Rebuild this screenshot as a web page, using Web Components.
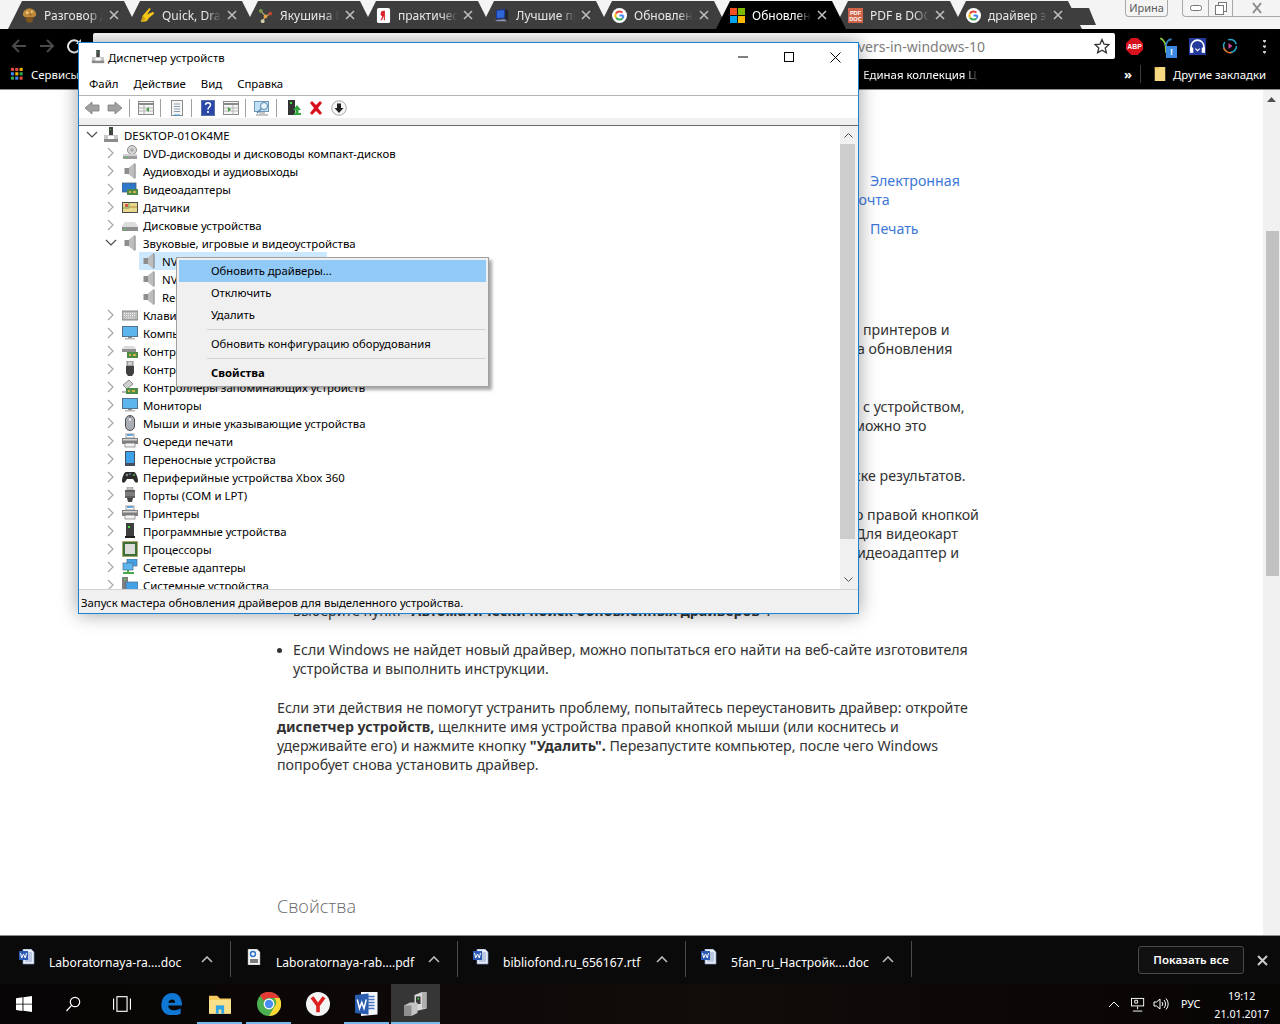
<!DOCTYPE html>
<html lang="ru">
<head>
<meta charset="utf-8">
<title>Обновление драйверов</title>
<style>
  html, body { margin: 0; height: 100%; overflow: hidden; background: #fff; }
  body { font-family: "Noto Sans", "Liberation Sans", sans-serif; }
  browser-page { display: flex; flex-direction: column; width: 1280px; height: 1024px; position: relative; }
</style>
</head>
<body>
<browser-page>
  <tab-strip>
    <browser-tab icon="muffin">Разговор д</browser-tab>
    <browser-tab icon="hand">Quick, Draw</browser-tab>
    <browser-tab icon="molecule">Якушина Е</browser-tab>
    <browser-tab icon="yandex">практичес</browser-tab>
    <browser-tab icon="screen">Лучшие пр</browser-tab>
    <browser-tab icon="google">Обновлен</browser-tab>
    <browser-tab icon="ms" active>Обновлен</browser-tab>
    <browser-tab icon="pdf">PDF в DOC</browser-tab>
    <browser-tab icon="google">драйвер э</browser-tab>
  </tab-strip>
  <browser-toolbar></browser-toolbar>
  <bookmark-bar></bookmark-bar>
  <article-page></article-page>
  <download-shelf>
    <download-item icon="word" width="227">Laboratornaya-ra....doc</download-item>
    <download-item icon="pdffile" width="227">Laboratornaya-rab....pdf</download-item>
    <download-item icon="word" width="228">bibliofond.ru_656167.rtf</download-item>
    <download-item icon="word" width="226">5fan_ru_Настройк....doc</download-item>
  </download-shelf>
  <win-taskbar></win-taskbar>
  <device-manager>
    <tree-row level="0" icon="pc" open>DESKTOP-01OK4ME</tree-row>
    <tree-row level="1" icon="dvd">DVD-дисководы и дисководы компакт-дисков</tree-row>
    <tree-row level="1" icon="speaker">Аудиовходы и аудиовыходы</tree-row>
    <tree-row level="1" icon="video">Видеоадаптеры</tree-row>
    <tree-row level="1" icon="sensor">Датчики</tree-row>
    <tree-row level="1" icon="hdd">Дисковые устройства</tree-row>
    <tree-row level="1" icon="speaker" open>Звуковые, игровые и видеоустройства</tree-row>
    <tree-row level="2" icon="speaker" selected>NVIDIA High Definition Audio</tree-row>
    <tree-row level="2" icon="speaker">NVIDIA Virtual Audio Device</tree-row>
    <tree-row level="2" icon="speaker">Realtek High Definition Audio</tree-row>
    <tree-row level="1" icon="keyboard">Клавиатуры</tree-row>
    <tree-row level="1" icon="monitor">Компьютер</tree-row>
    <tree-row level="1" icon="ide">Контроллеры IDE ATA/ATAPI</tree-row>
    <tree-row level="1" icon="usb">Контроллеры USB</tree-row>
    <tree-row level="1" icon="storage">Контроллеры запоминающих устройств</tree-row>
    <tree-row level="1" icon="monitor">Мониторы</tree-row>
    <tree-row level="1" icon="mouse">Мыши и иные указывающие устройства</tree-row>
    <tree-row level="1" icon="printer">Очереди печати</tree-row>
    <tree-row level="1" icon="portable">Переносные устройства</tree-row>
    <tree-row level="1" icon="gamepad">Периферийные устройства Xbox 360</tree-row>
    <tree-row level="1" icon="port">Порты (COM и LPT)</tree-row>
    <tree-row level="1" icon="printer">Принтеры</tree-row>
    <tree-row level="1" icon="software">Программные устройства</tree-row>
    <tree-row level="1" icon="cpu">Процессоры</tree-row>
    <tree-row level="1" icon="net">Сетевые адаптеры</tree-row>
    <tree-row level="1" icon="system">Системные устройства</tree-row>
  </device-manager>
</browser-page>

<script>
const UI_FONT = '"Noto Sans", "Liberation Sans", sans-serif';

// all icons are drawn on a 16x16 box unless the use site says otherwise
const ICONS = {
  muffin: '<path d="M1 7c0-4 3-6.500 7-6.500S15 3 15 7c0 1.500-1 2.500-2.500 2.500h-9C2 9.500 1 8.500 1 7z" fill="#c08a3a"/><path d="M3.500 9.500h9L11 15c-2 1-4 1-6 0z" fill="#7c5420"/><circle cx="5.500" cy="5" r="1.500" fill="#ecc98a"/><circle cx="10.500" cy="4" r="1.200" fill="#ecc98a"/><circle cx="9" cy="7" r="1" fill="#8a5a1c"/>',
  hand: '<path d="M1 15l2-7 7-8 1.500 1-4 6 6.500-3 1 2-5 4-3 4z" fill="#f5c518"/><path d="M1 15l2-7 3 4z" fill="#caa00f"/>',
  molecule: '<path d="M3 3l5 6 5-3M8 9l-3 5" stroke="#a39a80" stroke-width="1.500" fill="none"/><circle cx="3" cy="3" r="2" fill="#7d9e4a"/><circle cx="8" cy="9" r="2" fill="#e3a33b"/><circle cx="13" cy="6" r="2" fill="#c8452d"/><circle cx="5" cy="14" r="2" fill="#d8d0b0"/>',
  yandex: '<rect x="1" y="0" width="14" height="16" rx="2" fill="#fff"/><path d="M9.500 3H8C6 3 5 4.200 5 6c0 1.400.6 2.300 1.700 2.800L4.800 13h1.500l1.700-3.900h.3V13h1.200z" fill="#d8232a"/>',
  screen: '<path d="M2 2l10-1v10L2 12z" fill="#1a2f8a"/><path d="M3 3l8-1v8l-8 1z" fill="#2f66d6"/><path d="M12 1l3 2v11l-3-3z" fill="#20242e"/><path d="M1 13l10-1 3 2H3z" fill="#8d97b5"/>',
  google: '<circle cx="8" cy="8" r="8" fill="#fff"/><path d="M12.200 8H8" stroke="#4285f4" stroke-width="2"/><path d="M11.200 11a4.500 4.500 0 0 0 1-3" stroke="#4285f4" stroke-width="2" fill="none"/><path d="M4.200 10.200A4.500 4.500 0 0 0 11.200 11" stroke="#34a853" stroke-width="2" fill="none"/><path d="M4.200 5.800a4.500 4.500 0 0 0 0 4.400" stroke="#fbbc05" stroke-width="2" fill="none"/><path d="M11.200 5A4.500 4.500 0 0 0 4.200 5.800" stroke="#ea4335" stroke-width="2" fill="none"/>',
  ms: '<rect x="0" y="0" width="7.500" height="7.500" fill="#f25022"/><rect x="8.500" y="0" width="7.500" height="7.500" fill="#7fba00"/><rect x="0" y="8.500" width="7.500" height="7.500" fill="#00a4ef"/><rect x="8.500" y="8.500" width="7.500" height="7.500" fill="#ffb900"/>',
  pdf: '<rect width="16" height="16" fill="#d0634a"/><text x="8" y="7" font-size="6" font-family="Liberation Sans" font-weight="700" fill="#fff" text-anchor="middle">PDF</text><text x="8" y="14" font-size="6" font-family="Liberation Sans" font-weight="700" fill="#fff" text-anchor="middle">DOC</text>',
  word: '<path d="M4 0h8l3 3v12H4z" fill="#e9eef8" stroke="#7f95c0" stroke-width=".7"/><path d="M9 4h4M9 6h4M9 8h4M9 10h4M6 12h7" stroke="#8aa2cc"/><rect x="0" y="2" width="9" height="9" fill="#2b5bb5"/><path d="M1.500 4l1.200 5 1.800-4 1.800 4 1.200-5" stroke="#fff" fill="none"/>',
  pdffile: '<path d="M2 0h9l3 3v13H2z" fill="#f6f6f6" stroke="#9a9a9a" stroke-width=".5"/><circle cx="7" cy="5" r="2.500" fill="none" stroke="#2773c9" stroke-width="1.500"/><path d="M4 10h8v4H4z" fill="#7d7d7d"/>',
  pc: '<rect x="6" y="0" width="4" height="8" fill="#444"/><rect x="7" y="2" width="1" height="1" fill="#3fd13f"/><path d="M1 8h14v7H1z" fill="#c9c9c9"/><path d="M1 12h14v3H1z" fill="#8b8b8b"/><rect x="5" y="9" width="6" height="3" fill="#fff"/>',
  dvd: '<circle cx="10" cy="5" r="4.500" fill="#d6d6d6" stroke="#8c8c8c"/><circle cx="10" cy="5" r="1.200" fill="#fff" stroke="#8c8c8c"/><path d="M1 9h14v5H1z" fill="#9c9c9c"/><path d="M1 9h14v2H1z" fill="#d2d2d2"/><rect x="3" y="12" width="2" height="1" fill="#3fd13f"/>',
  speaker: '<path d="M2.500 5H7v6H2.500z" fill="#8d8d8d"/><path d="M7 4.500L12.500 0v16L7 11.500z" fill="#bdbdbd"/><path d="M12.500 0l1 1v14l-1 1z" fill="#6e6e6e"/>',
  video: '<rect x="0" y="2" width="14" height="9" fill="#2f78c9" stroke="#4a5e78" stroke-width=".8"/><rect x="5" y="8" width="11" height="6" fill="#4d8a45"/><path d="M7 10h2v2H7zM11 10h3v2h-3z" fill="#d4b24a"/>',
  sensor: '<rect x="0" y="3" width="16" height="11" fill="#4b4b4b"/><rect x="1" y="4" width="14" height="9" fill="#e8d98c"/><path d="M1 9h6V4" stroke="#6f9a58" fill="none"/><rect x="3" y="5" width="3" height="3" fill="#d9534f"/><path d="M8 8h7" stroke="#b58a3a"/>',
  hdd: '<path d="M3 5h10l3 4v5H0V9z" fill="#dcdcdc"/><path d="M0 10h16v4H0z" fill="#8f8f8f"/><rect x="2" y="12" width="2" height="1" fill="#3fd13f"/>',
  keyboard: '<rect x="0" y="4" width="16" height="9" fill="#bdbdbd" stroke="#6f6f6f" stroke-width=".8"/><path d="M2 6.500h12M2 8.500h12M4 10.800h8" stroke="#f3f3f3" stroke-dasharray="1 1"/>',
  monitor: '<rect x="0.500" y="1.500" width="15" height="10" fill="#5cb5ec" stroke="#54718c"/><rect x="6" y="12" width="4" height="1" fill="#8b8b8b"/><rect x="3" y="13" width="10" height="1.500" fill="#b8b8b8"/>',
  ide: '<path d="M2 3h10l2 3H0z" fill="#dcdcdc"/><rect x="0" y="6" width="14" height="3" fill="#8f8f8f"/><rect x="5" y="9" width="11" height="6" fill="#4d8a45"/><path d="M7 11h2v2H7zM11 11h3v2h-3z" fill="#d4b24a"/>',
  usb: '<rect x="5" y="0" width="6" height="5" fill="#cfcfcf" stroke="#555" stroke-width=".7"/><path d="M4 5h8v7l-2 3H6l-2-3z" fill="#3f3f3f"/>',
  storage: '<path d="M1 6l6-5 4 4-6 5z" fill="#cfcfcf" stroke="#666" stroke-width=".7"/><rect x="4" y="9" width="12" height="6" fill="#4d8a45"/><path d="M6 11h2v2H6zM10 11h3v2h-3z" fill="#d4b24a"/><path d="M0 13h4" stroke="#777"/>',
  mouse: '<rect x="3.500" y="0.500" width="9" height="15" rx="4.500" fill="#a9aeb5" stroke="#4d4d4d"/><path d="M8 1v5" stroke="#4d4d4d"/><rect x="7" y="3" width="2" height="3" fill="#e4e4e4"/>',
  printer: '<rect x="4" y="1" width="8" height="4" fill="#fff" stroke="#777" stroke-width=".7"/><path d="M5 2h6" stroke="#3f8fd8" stroke-width="1.500"/><rect x="0" y="5" width="16" height="6" fill="#7f7f7f"/><rect x="1" y="6" width="14" height="1.500" fill="#d4d4d4"/><rect x="3" y="10" width="10" height="4" fill="#f2f2f2" stroke="#777" stroke-width=".7"/>',
  portable: '<rect x="3" y="0" width="10" height="15" fill="#454f5c"/><rect x="4" y="1" width="8" height="11" fill="#3ea2ea"/>',
  gamepad: '<path d="M4 3h8c2 0 4 6 4 9 0 2-2 2-3 1l-2-3H5l-2 3c-1 1-3 1-3-1 0-3 2-9 4-9z" fill="#2b2b2b"/><circle cx="12" cy="6" r="1" fill="#5ab04a"/><circle cx="5" cy="6" r="1.200" fill="#888"/><circle cx="8" cy="5" r=".8" fill="#9ad"/>',
  port: '<rect x="5" y="0" width="6" height="3" fill="#c6c6c6" stroke="#777" stroke-width=".5"/><rect x="3" y="3" width="10" height="8" fill="#5e5e5e"/><path d="M3 6h10M3 8h10" stroke="#9b9b9b"/><path d="M5 11h6l-1 4H6z" fill="#444"/>',
  software: '<rect x="4" y="0" width="8" height="15" fill="#3f3f3f"/><rect x="6" y="3" width="2" height="2" fill="#3fe03f"/><rect x="3" y="13" width="10" height="2" fill="#1f1f1f"/>',
  cpu: '<rect x="0.500" y="0.500" width="15" height="15" fill="#3d6e3a" stroke="#b89a3c" stroke-dasharray="1 1"/><rect x="3" y="3" width="10" height="10" fill="#dcdcd8"/>',
  net: '<rect x="5" y="0" width="10" height="7" fill="#45a0e6" stroke="#4d6a86" stroke-width=".7"/><rect x="1" y="4" width="10" height="7" fill="#5cb5ec" stroke="#4d6a86" stroke-width=".7"/><path d="M6 11v2M1 14h11" stroke="#4ca84c" stroke-width="2"/>',
  system: '<rect x="0" y="0" width="6" height="16" fill="#7f7f7f"/><rect x="2" y="2" width="2" height="1" fill="#3fe03f"/><rect x="4" y="5" width="12" height="10" fill="#45a0e6" stroke="#4d6a86" stroke-width=".7"/>',
  winlogo: '<path d="M0 2.200l6.500-.9v6.400H0zM7.400 1.200L16 0v7.700H7.400zM0 8.500h6.500v6.400L0 14zM7.400 8.500H16V16l-8.600-1.200z" fill="#fff"/>',
  search: '<circle cx="10" cy="6" r="4.700" fill="none" stroke="#fff" stroke-width="1.200"/><path d="M6.600 9.400L1.500 15" stroke="#fff" stroke-width="1.200"/>',
  taskview: '<rect x="3.500" y="1.500" width="9" height="13" fill="none" stroke="#fff"/><path d="M1 3.500H.5v9H1M15 3.500h.5v9H15" stroke="#fff" fill="none"/>',
  edge: '<path d="M1 9C1 3 5 0 9 0c4 0 7 3 7 9H6c0 3 4 5 9 2v4c-6 3-14 1-14-6zm5-2h5c0-3-4-3-5 0z" fill="#0f78d4"/>',
  explorer: '<path d="M0 2h6l2 2h8v11H0z" fill="#f4c95d"/><rect x="0" y="5" width="16" height="10" fill="#fbe08a"/><rect x="5" y="9" width="6" height="6" fill="#2ea3e6"/><rect x="7" y="12" width="2" height="3" fill="#fbe08a"/>',
  chrome: '<circle cx="8" cy="8" r="8" fill="#4caf50"/><path d="M8 0a8 8 0 0 1 7 4H8a4 4 0 0 0-3.500 2L2 2a8 8 0 0 1 6-2z" fill="#e53935"/><path d="M15 4a8 8 0 0 1-7 12l3.500-6a4 4 0 0 0 0-6z" fill="#fdd835"/><circle cx="8" cy="8" r="3.600" fill="#fff"/><circle cx="8" cy="8" r="2.800" fill="#4a8cf0"/>',
  yabrowser: '<circle cx="8" cy="8" r="8" fill="#f4f4f4"/><path d="M4 3.500l4 5.500v4.500M12 3.500L8 9" stroke="#e02020" stroke-width="2.400" fill="none"/>',
  winword: '<path d="M4 0h11v15L4 16z" fill="#f3f6fb"/><path d="M8 3h5M8 5h5M8 7h5M8 9h5M8 11h5" stroke="#4a76c2"/><path d="M0 2l9-1v14l-9-1z" fill="#2a5db0"/><path d="M1.500 5l1.500 6 1.500-4 1.500 4 1.500-6" stroke="#fff" fill="none"/>',
  devmgr: '<path d="M7 2l5-2h3v11l-8 2z" fill="#d8d8d8"/><path d="M12 0h3v11h-3z" fill="#aeaeae"/><rect x="8" y="3" width="3" height="5" fill="#3a3a3a"/><rect x="9" y="4" width="1" height="1" fill="#3fe03f"/><path d="M0 9l4-2h5v7l-4 2H0z" fill="#c4c4c4"/><path d="M0 9h5v7H0z" fill="#8f8f8f"/>',
  back: '<path d="M1 8l7-6v3h7v6H8v3z" fill="#a0a0a0" stroke="#7e7e7e" stroke-width=".8"/>',
  forward: '<path d="M15 8L8 2v3H1v6h7v3z" fill="#a0a0a0" stroke="#7e7e7e" stroke-width=".8"/>',
  pane1: '<rect x=".5" y="1.500" width="15" height="13" fill="#f5f5f5" stroke="#8b8b8b"/><path d="M1 4h14" stroke="#8b8b8b" stroke-width="2"/><path d="M6 5v9M1 8h5M1 11h5M6 8h9M6 11h9" stroke="#b5b5b5"/><path d="M11 7l-3 2.500 3 2.500z" fill="#3e9a45"/>',
  pane2: '<rect x="2.500" y=".5" width="11" height="15" fill="#f5f5f5" stroke="#8b8b8b"/><path d="M5 4h6M5 6.500h6M5 9h6M5 11.500h6" stroke="#8e9cb0"/><path d="M5 15h6" stroke="#3e9ad8"/>',
  help: '<rect x="1.500" y=".5" width="13" height="15" fill="#2a47a8" stroke="#5a6ea8"/><path d="M5.500 5c0-3 5-3 5 0 0 2-2.500 2-2.500 4.500" stroke="#fff" stroke-width="1.500" fill="none"/><rect x="7.200" y="11" width="1.600" height="2" fill="#fff"/>',
  pane3: '<rect x=".5" y="1.500" width="15" height="13" fill="#f5f5f5" stroke="#8b8b8b"/><path d="M1 4h14" stroke="#8b8b8b" stroke-width="2"/><path d="M10 5v9M1 8h9M1 11h9M10 8h5M10 11h5" stroke="#b5b5b5"/><path d="M5 7l3 2.500-3 2.500z" fill="#3e9a45"/>',
  scan: '<rect x=".5" y="1.500" width="14" height="10" fill="#bfe0f5" stroke="#6f97b8"/><path d="M5 13h6M2 15h12" stroke="#8b8b8b"/><circle cx="10" cy="6" r="3.500" fill="#e7f4fc" stroke="#5a87ad"/><path d="M7.500 8.500L3 13" stroke="#5a87ad" stroke-width="1.500"/>',
  update: '<rect x="2" y="0" width="7" height="15" fill="#333"/><rect x="4" y="2" width="2" height="2" fill="#3fe03f"/><path d="M11 5l4 5h-2.500v3h-3v-3H7z" fill="#2fa53a"/><path d="M8 14h7" stroke="#2fa53a" stroke-width="2"/>',
  remove: '<path d="M2 3l2-2 4 4 4-4 2 2-4 5 4 5-2 2-4-4-4 4-2-2 4-5z" fill="#d8121c"/>',
  down: '<circle cx="8" cy="8" r="7.300" fill="#f7f7f7" stroke="#a8a8a8"/><path d="M6 3.500h4V8h2.500L8 13 3.500 8H6z" fill="#222"/>',
  abp: '<path d="M5 0h6l5 5v6l-5 5H5l-5-5V5z" fill="#d8121c"/><text x="8" y="10.500" font-size="6.500" font-family="Liberation Sans" font-weight="700" fill="#fff" text-anchor="middle">ABP</text>',
  sprout: '<path d="M3 1c4 2 5 5 5 13" stroke="#8dc63f" stroke-width="1.600" fill="none"/><path d="M13 2c-3 0-5 3-5 6" stroke="#2f7fb8" stroke-width="1.600" fill="none"/>',
  headphones: '<rect x="0" y="0" width="16" height="16" fill="#243a9c"/><path d="M2 12V8a6 6 0 0 1 12 0v4" stroke="#fff" stroke-width="1.600" fill="none"/><rect x="1" y="9" width="3" height="5" fill="#fff"/><rect x="12" y="9" width="3" height="5" fill="#fff"/><path d="M6 10l2 2 2-2" stroke="#fff" fill="none"/>',
  play: '<circle cx="8" cy="8" r="6.500" fill="none" stroke="#26a5c9" stroke-width="1.500" stroke-dasharray="10 4"/><path d="M1.700 9.500a6.500 6.500 0 0 0 8 5" stroke="#e2752b" stroke-width="1.500" fill="none"/><path d="M6.500 5l4 3-4 3z" fill="#d24a9a"/>',
  folder: '<path d="M2 0h12v16H2z" fill="#f7d983"/><path d="M2 0h5v2H2z" fill="#e4bf5e"/>',
  apps: '<g fill="#e64a3b"><rect x="1" y="1" width="3.500" height="3.500"/><rect x="6" y="1" width="3.500" height="3.500"/></g><rect x="11" y="1" width="3.500" height="3.500" fill="#f4b400"/><rect x="1" y="6" width="3.500" height="3.500" fill="#4285f4"/><rect x="6" y="6" width="3.500" height="3.500" fill="#f4b400"/><rect x="11" y="6" width="3.500" height="3.500" fill="#34a853"/><rect x="1" y="11" width="3.500" height="3.500" fill="#34a853"/><rect x="6" y="11" width="3.500" height="3.500" fill="#4285f4"/><rect x="11" y="11" width="3.500" height="3.500" fill="#e64a3b"/>',
  star: '<path d="M8 1.500l2 4.600 5 .5-3.800 3.300 1.200 4.900L8 12.200l-4.400 2.600 1.200-4.900L1 6.600l5-.5z" fill="none" stroke="#333" stroke-width="1.300"/>',
  net_tray: '<rect x=".5" y="1.500" width="13" height="8" fill="none" stroke="#fff"/><path d="M4 3.500h3v3H4z" fill="none" stroke="#fff"/><path d="M7 10v3M2 15h10" stroke="#fff"/>',
  sound: '<path d="M1 6h2.500L7 3v10l-3.500-3H1z" fill="none" stroke="#fff"/><path d="M9 6a3 3 0 0 1 0 4M11 4a6 6 0 0 1 0 8M13 2.500a8 8 0 0 1 0 11" fill="none" stroke="#fff"/>'
};

class AppIcon extends HTMLElement {
  connectedCallback() {
    if (this.shadowRoot) return;
    const size = this.getAttribute('size') || 16;
    const shadow = this.attachShadow({ mode: 'open' });
    shadow.innerHTML = `
      <style>:host { display: inline-flex; flex: none; width: ${size}px; height: ${size}px; } svg { display: block; }</style>
      <svg width="${size}" height="${size}" viewBox="0 0 16 16">${ICONS[this.getAttribute('name')] || ''}</svg>`;
  }
}

// shared boilerplate: each subclass returns its html with its <style> in it
class ShadowEl extends HTMLElement {
  connectedCallback() {
    if (this.shadowRoot) return;
    this.attachShadow({ mode: 'open' }).innerHTML = this.render();
  }
}

class TabStrip extends ShadowEl {
  render() {
    return `<style>
      :host { display: flex; height: 29px; flex: none; background: #f4f4f4; padding-left: 8px; box-sizing: border-box; position: relative; }
      .newtab { width: 32px; height: 17px; margin: 8px 0 0 -6px; background: #3e3e3e; clip-path: polygon(0 0, 78% 0, 100% 100%, 22% 100%); }
      .right { margin-left: auto; display: flex; align-items: flex-start; }
      .user { width: 41px; height: 16px; border: 1px solid #a8a8a8; border-top: 0; border-radius: 0 0 4px 4px; font: 11px/15px ${UI_FONT}; color: #5a5a5a; text-align: center; margin-right: 14px; }
      .controls { display: flex; height: 16px; border: 1px solid #a8a8a8; border-top: 0; border-right: 0; border-radius: 0 0 0 4px; }
      .controls span { display: flex; align-items: center; justify-content: center; border-right: 1px solid #a8a8a8; }
      .controls span:last-child { border: 0; }
    </style>
    <slot></slot>
    <div class="newtab"></div>
    <div class="right">
      <div class="user">Ирина</div>
      <div class="controls">
        <span style="width:25px"><svg width="12" height="6"><rect x=".5" y=".5" width="11" height="5" rx="2" fill="#fff" stroke="#777"/></svg></span>
        <span style="width:23px"><svg width="12" height="13"><rect x="3.500" y=".5" width="8" height="9" fill="#fff" stroke="#777"/><rect x=".5" y="3.500" width="8" height="9" fill="#fff" stroke="#777"/></svg></span>
        <span style="width:47px"><svg width="12" height="12"><path d="M2 1l8 10M10 1L2 11" stroke="#8a8a8a" stroke-width="2"/></svg></span>
      </div>
    </div>`;
  }
}

class BrowserTab extends ShadowEl {
  render() {
    const active = this.hasAttribute('active');
    return `<style>
      :host { display: flex; align-items: center; flex: none; width: 130px; height: 28px; margin: 1px -12px 0 0; box-sizing: border-box;
        padding: 0 19px 0 14px; font: 12px ${UI_FONT}; color: #fff; position: relative; z-index: ${active ? 2 : 1};
        background: ${active ? '#000' : '#3e3e3e'}; clip-path: polygon(0 100%, 14px 0, calc(100% - 14px) 0, 100% 100%); }
      .title { flex: 1; margin-left: 7px; white-space: nowrap; overflow: hidden; color: ${active ? '#fff' : '#e8e8e8'};
        -webkit-mask-image: linear-gradient(90deg, #000 75%, transparent 100%); mask-image: linear-gradient(90deg, #000 75%, transparent 100%); }
      svg { flex: none; margin-left: 6px; }
    </style>
    <app-icon name="${this.getAttribute('icon')}" size="15"></app-icon>
    <span class="title"><slot></slot></span>
    <svg width="10" height="10"><path d="M1 1l8 8M9 1L1 9" stroke="#bdbdbd" stroke-width="1.600"/></svg>`;
  }
}

class BrowserToolbar extends ShadowEl {
  render() {
    return `<style>
      :host { display: flex; align-items: center; height: 37px; flex: none; background: #000; padding: 0 8px 3px 10px; box-sizing: border-box; }
      .nav { display: flex; align-items: center; gap: 10px; width: 83px; flex: none; }
      .url { width: 1022px; height: 26px; flex: none; box-sizing: border-box; background: #fff; border-radius: 2px; display: flex; align-items: center;
        padding: 0 5px 0 765px; font: 14px ${UI_FONT}; color: #7d7d7d; white-space: nowrap; }
      .url span { flex: 1; overflow: hidden; }
      .ext { display: flex; align-items: center; margin-left: 11px; gap: 14px; }
      .dots { width: 3px; height: 15px; background: radial-gradient(circle 1.500px at 1.500px 2px, #ccc 99%, transparent) 0 0 / 3px 5.500px; }
    </style>
    <div class="nav">
      <svg width="18" height="16"><path d="M9 2L3 8l6 6M3 8h13" stroke="#4a4a4a" stroke-width="2" fill="none"/></svg>
      <svg width="18" height="16"><path d="M9 2l6 6-6 6M15 8H2" stroke="#4a4a4a" stroke-width="2" fill="none"/></svg>
      <svg width="16" height="16"><path d="M13 5a6 6 0 1 0 1 4" stroke="#eee" stroke-width="2" fill="none"/><path d="M15 1v5h-5z" fill="#eee"/></svg>
    </div>
    <div class="url"><span>vers-in-windows-10</span><app-icon name="star"></app-icon></div>
    <div class="ext">
      <app-icon name="abp" size="17"></app-icon>
      <span style="position:relative;display:inline-flex"><app-icon name="sprout" size="18"></app-icon><i style="position:absolute;left:9px;top:9px;width:11px;height:12px;background:#3d88e0;color:#fff;font:700 9px/12px 'Liberation Sans';text-align:center">!</i></span>
      <app-icon name="headphones" size="17"></app-icon>
      <app-icon name="play" size="16" style="margin-left:2px"></app-icon>
      <span class="dots" style="margin-left:11px"></span>
    </div>`;
  }
}

class BookmarkBar extends ShadowEl {
  render() {
    return `<style>
      :host { display: flex; align-items: center; height: 24px; flex: none; box-sizing: border-box; background: #000; padding: 0 14px 7px 10px;
        border-bottom: 1px solid #8d8d8d; font: 11.400px ${UI_FONT}; color: #fff; white-space: nowrap; }
      .first { margin-left: 7px; }
      .fade { margin-left: 784px; width: 116px; -webkit-mask-image: linear-gradient(90deg, #000 88%, transparent); mask-image: linear-gradient(90deg, #000 88%, transparent); }
      .more { margin-left: auto; font-weight: 700; font-size: 13px; }
      .sep { width: 1px; height: 18px; background: #3c3c3c; margin: 0 12px 0 8px; }
    </style>
    <app-icon name="apps" size="14"></app-icon>
    <span class="first">Сервисы</span>
    <span class="fade">Единая коллекция Ц</span>
    <span class="more">»</span>
    <span class="sep"></span>
    <app-icon name="folder" size="14" style="margin-right:-1px"></app-icon>
    <span style="margin-left:7px">Другие закладки</span>`;
  }
}

class ArticlePage extends ShadowEl {
  render() {
    return `<style>
      :host { display: flex; flex: 1; min-height: 0; background: #fff; font: 14.200px/19px ${UI_FONT}; color: #333; }
      main { flex: 1; padding-top: 80.500px; white-space: nowrap; }
      .r { display: block; }
      a { color: #3d78d8; text-decoration: none; }
      .lines { display: block; margin-left: 277px; }
      ul { margin: 20px 0 20px 277px; padding: 0 0 0 16px; }
      li::marker { font-size: 13px; }
      h2 { margin: 119.500px 0 0 277px; font: 300 18px/26px "Open Sans", ${UI_FONT}; color: #6a6a6a; }
      .bar { flex: none; width: 17px; background: #f1f1f1; display: flex; flex-direction: column; align-items: center; }
      .thumb { width: 13px; height: 345px; margin-top: 129px; margin-left: 1px; background: #c1c1c1; }
      svg { margin-top: 7px; }
    </style>
    <main>
      <a class="r" style="margin-left:870px">Электронная</a>
      <a class="r" style="margin-left:850px">почта</a>
      <a class="r" style="margin:10px 0 0 870px">Печать</a>
      <span class="r" style="margin:82px 0 0 863px">принтеров и</span>
      <span class="r" style="margin-left:857px">а обновления</span>
      <span class="r" style="margin:39px 0 0 863px">с устройством,</span>
      <span class="r" style="margin-left:854px">можно это</span>
      <span class="r" style="margin:31px 0 0 828px">поиске результатов.</span>
      <span class="r" style="margin:20px 0 0 855px">о правой кнопкой</span>
      <span class="r" style="margin-left:855px">Для видеокарт</span>
      <span class="r" style="margin-left:849px">видеоадаптер и</span>
      <ul style="margin-top:39px;margin-bottom:0;list-style:none"><li>выберите пункт <b>"Автоматически поиск обновленных драйверов"</b>.</li></ul>
      <ul>
        <li>Если Windows не найдет новый драйвер, можно попытаться его найти на веб-сайте изготовителя<br>устройства и выполнить инструкции.</li>
      </ul>
      <span class="lines">Если эти действия не помогут устранить проблему, попытайтесь переустановить драйвер: откройте<br>
      <b>диспетчер устройств,</b> щелкните имя устройства правой кнопкой мыши (или коснитесь и<br>
      удерживайте его) и нажмите кнопку <b>"Удалить".</b> Перезапустите компьютер, после чего Windows<br>
      попробует снова установить драйвер.</span>
      <h2>Свойства</h2>
    </main>
    <div class="bar">
      <svg width="9" height="5"><path d="M0 5l4.500-5L9 5z" fill="#505050"/></svg>
      <div class="thumb"></div>
    </div>`;
  }
}

class DownloadShelf extends ShadowEl {
  render() {
    return `<style>
      :host { display: flex; align-items: center; height: 49px; flex: none; box-sizing: border-box; background: #0a0a0a; border-top: 1px solid #8d8d8d; padding-left: 4px; }
      button { margin-left: auto; width: 106px; height: 28px; box-sizing: border-box; background: #111; border: 1px solid #4a4a4a; border-radius: 3px; color: #fff; font: 600 11.500px ${UI_FONT}; padding: 0 0 2px; }
      svg { margin: 0 12px 0 13px; }
    </style>
    <slot></slot>
    <button>Показать все</button>
    <svg width="11" height="11"><path d="M1 1l9 9M10 1l-9 9" stroke="#ccc" stroke-width="2"/></svg>`;
  }
}

class DownloadItem extends ShadowEl {
  render() {
    return `<style>
      :host { display: flex; align-items: center; flex: none; width: ${this.getAttribute('width')}px; height: 36px; box-sizing: border-box; border-right: 1px solid #4a4a4a;
        margin-bottom: 2px; padding-left: 15px; color: #fff; font: 12.100px ${UI_FONT}; white-space: nowrap; }
      .name { margin-left: 14px; flex: 1; padding-top: 6px; }
      svg { margin-right: 17px; }
      app-icon { margin-top: -4px; }
    </style>
    <app-icon name="${this.getAttribute('icon')}" size="16"></app-icon>
    <span class="name"><slot></slot></span>
    <svg width="12" height="7"><path d="M1 6l5-5 5 5" stroke="#bbb" stroke-width="1.600" fill="none"/></svg>`;
  }
}

class WinTaskbar extends ShadowEl {
  render() {
    const apps = [['winlogo', 16, 0], ['search', 16, 0], ['taskview', 18, 0], ['edge', 22, 0], ['explorer', 22, 1], ['chrome', 24, 1], ['yabrowser', 24, 0], ['winword', 24, 1], ['devmgr', 24, 2]];
    const cells = apps.map(([name, size, state]) =>
      `<div class="cell ${state ? 'open' : ''} ${state === 2 ? 'now' : ''}"><app-icon name="${name}" size="${size}"></app-icon></div>`).join('');
    return `<style>
      :host { display: flex; align-items: stretch; height: 40px; flex: none; background: linear-gradient(90deg, #060404, #120c0a 55%, #070404); color: #fff; font: 10.700px ${UI_FONT}; }
      .cells { display: flex; margin-left: -1px; }
      .cell { width: 49px; display: flex; align-items: center; justify-content: center; box-sizing: border-box; border-bottom: 2px solid transparent; padding-top: 2px; }
      .cell.open { border-image: linear-gradient(90deg, transparent 5%, #76b9ed 5%, #76b9ed 95%, transparent 95%) 1; }
      .cell.now { background: #363636; border-image: none; border-bottom-color: #76b9ed; }
      .tray { margin-left: auto; display: flex; align-items: center; padding-right: 11px; }
      .clock { text-align: center; line-height: 18px; margin-left: 14px; padding-top: 1px; }
    </style>
    <div class="cells">${cells}</div>
    <div class="tray">
      <svg width="12" height="8"><path d="M1 7l5-5 5 5" stroke="#fff" fill="none"/></svg>
      <app-icon name="net_tray" size="15" style="margin-left:11px"></app-icon>
      <app-icon name="sound" size="16" style="margin-left:7px"></app-icon>
      <span style="margin-left:12px">РУС</span>
      <div class="clock"><div>19:12</div><div>21.01.2017</div></div>
    </div>`;
  }
}

class TreeRow extends ShadowEl {
  render() {
    const level = Number(this.getAttribute('level'));
    const open = this.hasAttribute('open');
    const chevron = open
      ? '<path d="M1 3l5 5 5-5" stroke="#4d4d4d" fill="none" stroke-width="1.200"/>'
      : '<path d="M3 1l5 5-5 5" stroke="#a6a6a6" fill="none" stroke-width="1.200"/>';
    const selected = this.hasAttribute('selected');
    return `<style>
      :host { display: flex; align-items: center; height: 18px; flex: none; padding-left: ${7 + level * 19}px; font: 11.400px ${UI_FONT}; color: #000; white-space: nowrap; }
      .chev { width: 12px; height: 12px; margin-right: 3px; visibility: ${level === 2 ? 'hidden' : 'visible'}; flex: none; }
      .label { display: flex; align-items: center; height: 18px; padding: 0 ${selected ? 8 : 2}px 0 2px; gap: 5px; ${selected ? 'background: #cce8ff;' : ''} }
    </style>
    <svg class="chev" viewBox="0 0 12 12">${chevron}</svg>
    <div class="label"><app-icon name="${this.getAttribute('icon')}"></app-icon><span><slot></slot></span></div>`;
  }
}

class DeviceManager extends ShadowEl {
  render() {
    const tool = (name, extra = '') => `<app-icon name="${name}" style="${extra}"></app-icon>`;
    return `<style>
      :host { position: absolute; left: 78px; top: 42px; width: 781px; height: 572px; box-sizing: border-box; background: #fff; border: 1px solid #1883d7;
        box-shadow: 0 0 18px rgba(0, 0, 0, .38); display: flex; flex-direction: column; font: 11.400px ${UI_FONT}; color: #000; z-index: 5; }
      .title { display: flex; align-items: center; height: 30px; flex: none; box-sizing: border-box; padding: 0 0 2px 12px; }
      .caps { margin-left: auto; display: flex; }
      .caps div { width: 46px; height: 28px; display: flex; align-items: center; justify-content: center; }
      .menu { display: flex; align-items: center; gap: 15px; height: 23px; flex: none; box-sizing: border-box; padding: 0 0 2px 10px; border-bottom: 1px solid #b4b4b4; }
      .tools { display: flex; align-items: center; height: 22px; flex: none; box-sizing: border-box; padding: 1px 0 0 5px; }
      .tools i { width: 1px; height: 18px; background: #a0a0a0; margin: 0 8px 0 -1px; }
      .tools app-icon { margin-right: 7px; }
      .band { height: 7px; flex: none; background: #f0f0f0; border-bottom: 1px solid #696969; }
      .body { flex: 1; min-height: 0; display: flex; }
      .tree { flex: 1; min-width: 0; overflow: hidden; display: flex; flex-direction: column; }
      .scroll { width: 18px; flex: none; background: #f0f0f0; display: flex; flex-direction: column; align-items: flex-start; }
      .scroll svg { margin: 7px 0 0 4px; flex: none; }
      .thumb { width: 15px; height: 395px; margin-top: 6px; background: #cdcdcd; flex: none; }
      .status { height: 24px; flex: none; box-sizing: border-box; background: #f0f0f0; border-top: 1px solid #d2d2d2; padding: 1px 2px 0; display: flex; align-items: center; font-size: 11.300px; }
      context-menu { position: absolute; left: 97px; top: 214px; }
    </style>
    <div class="title">
      <app-icon name="pc" size="14"></app-icon><span style="margin-left:3px">Диспетчер устройств</span>
      <div class="caps">
        <div><svg width="10" height="10"><path d="M0 5h10" stroke="#000"/></svg></div>
        <div><svg width="10" height="10"><rect x=".5" y=".5" width="9" height="9" fill="none" stroke="#000"/></svg></div>
        <div><svg width="11" height="11"><path d="M.5.5l10 10M10.500.5l-10 10" stroke="#000"/></svg></div>
      </div>
    </div>
    <div class="menu"><span>Файл</span><span>Действие</span><span>Вид</span><span>Справка</span></div>
    <div class="tools">
      ${tool('back')}${tool('forward')}<i></i>${tool('pane1')}<i></i>${tool('pane2')}<i></i>${tool('help')}${tool('pane3')}<i></i>${tool('scan')}<i></i>${tool('update', 'margin-left:1px')}${tool('remove', 'margin-left:-1px')}${tool('down')}
    </div>
    <div class="band"></div>
    <div class="body">
      <div class="tree"><slot></slot></div>
      <div class="scroll">
        <svg width="9" height="5"><path d="M.5 4.500l4-4 4 4" stroke="#505050" fill="none"/></svg>
        <div class="thumb"></div>
        <svg width="9" height="5" style="margin-top:38px"><path d="M.5.5l4 4 4-4" stroke="#505050" fill="none"/></svg>
      </div>
    </div>
    <div class="status">Запуск мастера обновления драйверов для выделенного устройства.</div>
    <context-menu></context-menu>`;
  }
}

class ContextMenu extends ShadowEl {
  render() {
    return `<style>
      :host { display: block; width: 313px; box-sizing: border-box; background: #f0f0f0; border: 1px solid #a0a0a0; padding: 2px; box-shadow: 3px 3px 3px rgba(0, 0, 0, .35); font: 11.300px ${UI_FONT}; color: #000; }
      div { height: 22px; line-height: 22px; padding-left: 32px; }
      .on { background: #91c9f7; }
      hr { border: 0; border-top: 1px solid #d4d4d4; margin: 3px 0 3px 28px; height: 0; }
    </style>
    <div class="on">Обновить драйверы...</div>
    <div>Отключить</div>
    <div>Удалить</div>
    <hr>
    <div>Обновить конфигурацию оборудования</div>
    <hr>
    <div><b>Свойства</b></div>`;
  }
}

customElements.define('app-icon', AppIcon);
customElements.define('tab-strip', TabStrip);
customElements.define('browser-tab', BrowserTab);
customElements.define('browser-toolbar', BrowserToolbar);
customElements.define('bookmark-bar', BookmarkBar);
customElements.define('article-page', ArticlePage);
customElements.define('download-shelf', DownloadShelf);
customElements.define('download-item', DownloadItem);
customElements.define('win-taskbar', WinTaskbar);
customElements.define('tree-row', TreeRow);
customElements.define('context-menu', ContextMenu);
customElements.define('device-manager', DeviceManager);
</script>
</body>
</html>
